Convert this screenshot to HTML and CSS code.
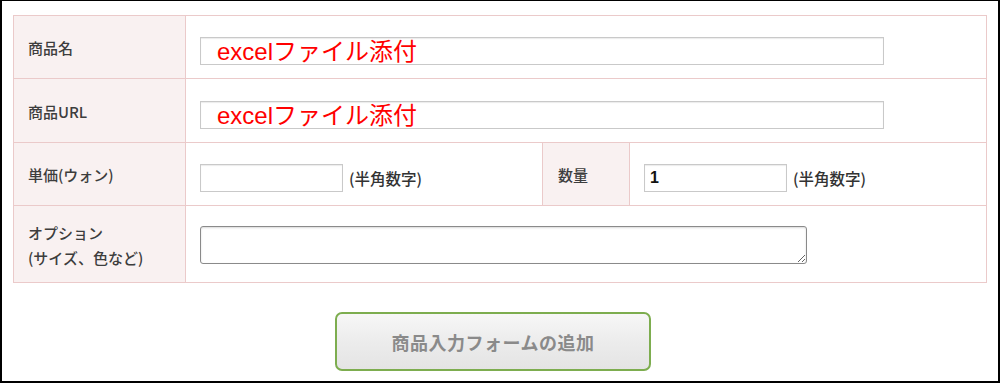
FILE: index.html
```html
<!DOCTYPE html>
<html lang="ja">
<head>
    <meta charset="UTF-8">
    <meta name="viewport" content="width=device-width, initial-scale=1.0">
    <title>商品入力フォーム</title>
    <link rel="stylesheet" href="styles.css">
</head>
<body>
    <div class="frame">
        <table class="item-table">
            <colgroup>
                <col class="col-label">
                <col class="col-price">
                <col class="col-qty-label">
                <col>
            </colgroup>
            <tr class="row-name">
                <th>商品名</th>
                <td colspan="3">
                    <div class="text-box wide"><span class="note">excelファイル添付</span></div>
                </td>
            </tr>
            <tr class="row-url">
                <th>商品URL</th>
                <td colspan="3">
                    <div class="text-box wide"><span class="note">excelファイル添付</span></div>
                </td>
            </tr>
            <tr class="row-price">
                <th>単価(ウォン)</th>
                <td>
                    <input type="text" class="text-box short"><span class="hint">(半角数字)</span>
                </td>
                <th class="qty-label">数量</th>
                <td>
                    <input type="text" class="text-box short" value="1"><span class="hint">(半角数字)</span>
                </td>
            </tr>
            <tr class="row-option">
                <th>オプション<br>(サイズ、色など)</th>
                <td colspan="3">
                    <textarea class="option-box"></textarea>
                </td>
            </tr>
        </table>

        <div class="actions">
            <button type="button" class="add-btn">商品入力フォームの追加</button>
        </div>
    </div>
</body>
</html>
```

FILE: styles.css
```css
html, body {
    margin: 0;
    padding: 0;
    background: #fff;
}
body {
    font-family: "Noto Sans CJK JP", "Liberation Sans", sans-serif;
    color: #333;
}
.frame {
    height: 383px;
    box-sizing: border-box;
    border: 2px solid #000;
    border-top-width: 1px;
    padding: 14px 11px 0;
}
.item-table {
    width: 100%;
    border-collapse: collapse;
    table-layout: fixed;
    border: 1px solid #ebcaca;
}
.col-label {
    width: 172px;
}
.col-price {
    width: 357px;
}
.col-qty-label {
    width: 87px;
}
.item-table th,
.item-table td {
    box-sizing: border-box;
    border: 1px solid #ebcaca;
    vertical-align: middle;
    text-align: left;
}
.item-table th {
    background: #f9f1f1;
    font-weight: 500;
    font-size: 15px;
    line-height: 25px;
    color: #3d3d3d;
    padding: 1px 0 0 14px;
}
.item-table td {
    padding: 8px 0 0 14px;
}
.row-name th, .row-name td {
    height: 63px;
}
.row-url th, .row-url td {
    height: 64px;
}
.row-price th, .row-price td {
    height: 63px;
}
.row-option th, .row-option td {
    height: 77px;
}
.row-option td {
    padding-top: 2px;
}
.text-box {
    display: inline-block;
    box-sizing: border-box;
    height: 28px;
    border: 1px solid #c9c9c9;
    box-shadow: inset 0 1px 1px rgba(0, 0, 0, 0.08);
    background: #fff;
    vertical-align: middle;
    margin: 0;
    font-family: "Liberation Sans", sans-serif;
    font-size: 16px;
    font-weight: bold;
    color: #111;
    padding: 0 5px;
}
.text-box:focus {
    outline: none;
}
.wide {
    width: 684px;
    padding: 0 0 0 16px;
    line-height: 28px;
}
.short {
    width: 143px;
}
.note {
    font-family: "Liberation Sans", "Noto Sans CJK JP", sans-serif;
    font-weight: normal;
    font-size: 24px;
    color: #f00;
}
.hint {
    display: inline-block;
    vertical-align: middle;
    font-size: 15.5px;
    font-weight: 500;
    color: #333;
    margin-left: 6px;
}
.qty-label {
    padding-left: 15px !important;
}
.option-box {
    display: block;
    box-sizing: border-box;
    width: 607px;
    height: 38px;
    margin: 0;
    border: 1px solid #8a8a8a;
    border-radius: 3px;
    box-shadow: inset 0 1px 2px rgba(0, 0, 0, 0.15);
    resize: both;
}
.actions {
    display: flex;
    justify-content: center;
    padding: 29px 14px 0 0;
}
.add-btn {
    width: 316px;
    height: 59px;
    border: 2px solid #7dad4f;
    border-radius: 7px;
    background: linear-gradient(#f7f7f7, #ececec 50%, #e4e4e4);
    font-family: "Noto Sans CJK JP", sans-serif;
    font-size: 18px;
    font-weight: bold;
    color: #8a8a8a;
    letter-spacing: 0.5px;
    cursor: pointer;
}
```
